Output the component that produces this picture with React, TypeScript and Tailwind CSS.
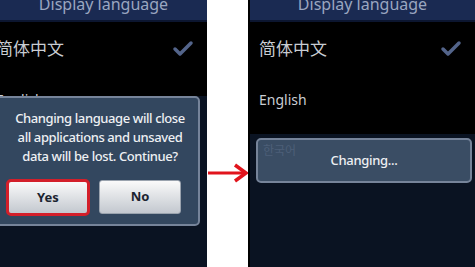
import { Check } from "lucide-react";

const FONT = "font-['Noto_Sans','Noto_Sans_CJK_SC',sans-serif]";

function Header() {
  return (
    <div className="h-[22px] overflow-hidden bg-[#1a2a52] border-b-2 border-b-[#0c1630]">
      <div className="-mt-[7px] text-center text-[16px] leading-[22px] text-[#9aa6c0] whitespace-nowrap">
        Display language
      </div>
    </div>
  );
}

function Row({ label, checked }: { label: string; checked?: boolean }) {
  return (
    <div className="flex h-[51px] items-center justify-between pr-[12px] whitespace-nowrap">
      <span className="text-[#c9cdd3]">{label}</span>
      {checked && <Check className="text-[#53648a]" size={24} strokeWidth={3.5} />}
    </div>
  );
}

function LeftPanel() {
  return (
    <div className="relative w-[207px] shrink-0 overflow-hidden bg-black">
      <Header />
      <div className="-ml-[4px] mt-[1px]">
        <div className="text-[17px]">
          <Row label="简体中文" checked />
        </div>
        <div className="text-[14px]">
          <Row label="English" />
        </div>
      </div>
      <div className="absolute inset-x-0 top-[96px] bottom-0 bg-[#0a1322]" />
      <div className="absolute -left-[8px] top-[96px] w-[208px] h-[130px] rounded-[5px] border-2 border-[#76849a] bg-[#33475f] pt-[11px]">
        <div className="pl-[8px] text-center text-[13px] tracking-[-0.4px] leading-[19px] font-medium text-[#eef0f3] whitespace-nowrap">
          <div>Changing language will close</div>
          <div>all applications and unsaved</div>
          <div>data will be lost. Continue?</div>
        </div>
        <div className="mt-[13px] flex gap-[9px] pl-[12px]">
          <button className="h-[37px] w-[84px] rounded-[5px] border-[3px] border-[#d31f2a] bg-gradient-to-b from-[#fafafa] to-[#c3c8cf] text-[13px] font-bold text-[#1c2430]">
            Yes
          </button>
          <button className="mt-[1px] h-[34px] w-[82px] rounded-[3px] border border-[#9aa3ae] bg-gradient-to-b from-[#fafafa] to-[#c3c8cf] text-[13px] font-bold text-[#1c2430]">
            No
          </button>
        </div>
      </div>
    </div>
  );
}

function Arrow() {
  return (
    <div className="flex w-[41px] shrink-0 items-center bg-white pt-[78px]">
      <svg width="41" height="20" viewBox="0 0 41 20">
        <path d="M1 10 H38" stroke="#e1141c" strokeWidth="3" fill="none" />
        <path d="M28 2 L39 10 L28 18" stroke="#e1141c" strokeWidth="3.5" fill="none" strokeLinejoin="miter" />
      </svg>
    </div>
  );
}

function RightPanel() {
  return (
    <div className="relative flex-1 overflow-hidden border-l-2 border-l-black bg-black">
      <Header />
      <div className="ml-[9px] mt-[1px]">
        <div className="text-[17px]">
          <Row label="简体中文" checked />
        </div>
        <div className="text-[14px]">
          <Row label="English" />
        </div>
      </div>
      <div className="absolute inset-x-0 top-[134px] bottom-0 bg-[#0a1322]" />
      <div className="absolute left-[6px] right-[3px] top-[138px] h-[45px] rounded-[5px] border-2 border-[#76849a] bg-[#3a4d64]">
        <div className="absolute left-[5px] top-[1px] text-[12px] text-[#4d5f78] font-['Noto_Sans_CJK_KR',sans-serif]">
          한국어
        </div>
        <div className="flex h-full items-center justify-center text-[13px] tracking-[-0.3px] font-medium text-[#eef0f3]">
          Changing...
        </div>
      </div>
    </div>
  );
}

export default function App() {
  return (
    <div className={`flex h-[267px] w-[475px] overflow-hidden bg-white ${FONT}`}>
      <LeftPanel />
      <Arrow />
      <RightPanel />
    </div>
  );
}
